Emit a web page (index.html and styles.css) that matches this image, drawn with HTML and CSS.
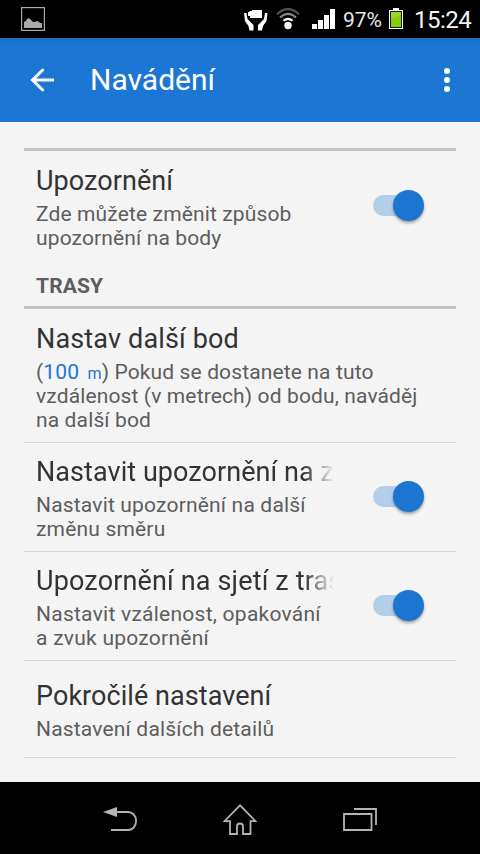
FILE: index.html
```html
<!DOCTYPE html>
<html lang="cs">
<head>
<meta charset="utf-8">
<title>Navádění</title>
<link rel="stylesheet" href="styles.css">
</head>
<body>
<div class="screen">
  <div class="status">
    <svg class="picture" width="24" height="24" viewBox="0 0 24 24"><rect x=".6" y=".6" width="22.8" height="22.8" fill="none" stroke="#aaa" stroke-width="1.2"/><path d="M3 21v-6l2-1 1-2 2-1 2 2 2 2 2 0 2-1 2 1 1 1 2 0v5z" fill="#aaa"/></svg>
    <svg class="care" width="24" height="21" viewBox="0 0 24 21" fill="#fff"><path d="M5.500 1H8V0h10v8H6V6H4V2h1.500zM0 3h2.500l1 6 6 6v5.500H5.500L4.500 16 1 11zM23.500 3H21l-1 6-6 6v5.500h4l1-4.500 3.500-5z"/></svg>
    <svg class="wifi" width="24" height="22" viewBox="0 0 24 22" fill="none"><path d="M1 6.200Q12-4 23 6.200" stroke="#555" stroke-width="2"/><path d="M4 9.500Q12 2.200 20 9.500" stroke="#888" stroke-width="2"/><path d="M7.500 12.800Q12 8.800 16.500 12.800" stroke="#fff" stroke-width="2.200"/><circle cx="12" cy="17.500" r="3.700" fill="#fff"/></svg>
    <svg class="signal" width="23" height="20" viewBox="0 0 23 20" fill="#fff"><path d="M0 15h5v5H0zM6 11h5v9H6zM12 6h5v14h-5zM18 0h5v20h-5z"/></svg>
    <span class="percent">97%</span>
    <svg class="battery" width="14" height="21" viewBox="0 0 14 21"><path d="M0 2h4V0h6v2h4v19H0z" fill="#fff"/><path d="M1 3h12v17H1z" fill="#141d00"/><path d="M2 4h10v15H2z" fill="#84cf08"/><path d="M2 4h10v3L2 11z" fill="#98d820"/></svg>
    <span class="clock">15:24</span>
  </div>
  <header class="appbar">
    <svg class="back" width="26" height="24" viewBox="0 0 26 24" fill="none" stroke="#fff" stroke-width="3"><path d="M13.500 1.200 2.500 12l11 10.800M2 12h22"/></svg>
    <h1 class="heading">Navádění</h1>
    <svg class="more" width="6" height="24" viewBox="0 0 6 24" fill="#fff"><circle cx="3" cy="3" r="3"/><circle cx="3" cy="12" r="3"/><circle cx="3" cy="21" r="3"/></svg>
  </header>
  <main class="list">
    <section class="item first">
      <div class="text"><h2 class="title">Upozornění</h2><p class="sub">Zde můžete změnit způsob<br>upozornění na body</p></div>
      <div class="switch"><span class="thumb"></span></div>
    </section>
    <h3 class="group">TRASY</h3>
    <section class="item next">
      <div class="text"><h2 class="title wide">Nastav další bod</h2><p class="sub">(<span class="value">100 <small class="unit">m</small></span>) Pokud se dostanete na tuto<br>vzdálenost (v metrech) od bodu, naváděj<br>na další bod</p></div>
    </section>
    <section class="item">
      <div class="text narrow"><h2 class="title">Nastavit upozornění na z</h2><p class="sub loose">Nastavit upozornění na další<br>změnu směru</p></div>
      <div class="switch"><span class="thumb"></span></div>
    </section>
    <section class="item">
      <div class="text narrow"><h2 class="title wide">Upozornění na sjetí z tras</h2><p class="sub looser">Nastavit vzálenost, opakování<br>a zvuk upozornění</p></div>
      <div class="switch"><span class="thumb"></span></div>
    </section>
    <section class="item last">
      <div class="text"><h2 class="title">Pokročilé nastavení</h2><p class="sub loose">Nastavení dalších detailů</p></div>
    </section>
  </main>
  <nav class="nav">
    <svg width="34" height="26" viewBox="0 0 34 26"><path d="M13 5h12c4 0 8.100 3 8.100 9s-4.100 9-8.100 9H8" fill="none" stroke="#b4b4b4" stroke-width="1.800"/><path d="M0 5 14 0v10z" fill="#b4b4b4"/></svg>
    <svg width="34" height="32" viewBox="0 0 34 32" fill="none" stroke="#b4b4b4" stroke-width="1.800"><path d="M17 1.300 1.500 17.200H7V30h7v-7.500q0-3 3-3t3 3V30h7.500V17.200h5z"/></svg>
    <svg width="34" height="24" viewBox="0 0 34 24" fill="none" stroke="#b4b4b4" stroke-width="1.800"><path d="M1 6h27.500v16H1zM11 1h22v16"/></svg>
  </nav>
</div>
</body>
</html>
```
FILE: styles.css
```css
* { box-sizing: border-box; }
body, h1, h2, h3, p { margin: 0; }
body { background: #f4f4f4; font-family: Roboto, sans-serif; }
.screen { width: 480px; height: 854px; display: flex; flex-direction: column; overflow: hidden; }
.status { height: 38px; background: #000; display: flex; align-items: center; color: #fff; flex: none; }
svg { display: block; flex: none; }
.picture { margin: 0 198px 0 21px; }
.care { margin-left: 1px; margin-top: 2px; }
.wifi { margin-left: 8px; margin-top: -1px; }
.signal { margin-left: 12px; }
.percent { width: 38px; margin-left: 8px; padding-top: 2px; font-size: 21px; line-height: 24px; white-space: nowrap; color: #e8e8e8; letter-spacing: -.1px; }
.battery { margin-left: 8px; margin-top: -1px; }
.clock { margin-left: 11px; padding-top: 2px; font-size: 24px; line-height: 28px; letter-spacing: -.5px; color: #f4f4f4; }
.appbar { height: 84px; flex: none; background: linear-gradient(#1d6ebf, #1b76d4 8px); display: flex; align-items: center; color: #fff; }
.back { margin-left: 29px; position: relative; left: 1px; }
.heading { margin-left: 35px; font-size: 30px; line-height: 36px; font-weight: 400; flex: 1; }
.more { margin-right: 30px; }
.list { margin: 26px 24px 0; flex: 1; }
.item { display: flex; align-items: center; justify-content: space-between; padding: 13px 12px 10px; border-bottom: 1px solid #d8d8d8; }
.first { padding: 14px 12px 0; border-top: 3px solid #c2c2c2; border-bottom: 0; }
.next { padding-top: 14px; border-top: 3px solid #c2c2c2; }
.last { padding: 19px 12px 16px; }
.text { white-space: nowrap; }
.narrow { width: 297px; }
.title { font-size: 27px; line-height: 32px; font-weight: 400; color: #333; letter-spacing: .06px; }
.title.wide { letter-spacing: .15px; }
.narrow .title { width: 306px; -webkit-mask-image: linear-gradient(to right, #000 268px, transparent 298px); mask-image: linear-gradient(to right, #000 268px, transparent 298px); }
.sub { margin-top: 5px; font-size: 21px; line-height: 24px; color: #5d5d5d; letter-spacing: .13px; }
.sub.loose { letter-spacing: .18px; }
.sub.looser { letter-spacing: .25px; }
.value { color: #1b76d4; }
.unit { font-size: 16px; margin-left: 3px; line-height: 1; }
.group { padding: 24px 12px 8px; font-size: 21px; line-height: 24px; color: #5d5d5d; letter-spacing: .15px; }
.switch { width: 51px; height: 21px; flex: none; margin: 0 20px 4px 0; border-radius: 11px; background: linear-gradient(to right, #b3cfea 40px, transparent 40px); display: flex; justify-content: flex-end; align-items: center; }
.thumb { width: 31px; height: 31px; flex: none; border-radius: 50%; background: #1b75d1; box-shadow: 0 2px 3px rgba(0,0,0,.35); }
.nav { height: 72px; flex: none; background: #000; display: flex; justify-content: space-between; align-items: center; padding: 3px 103px 0 103px; }
```
